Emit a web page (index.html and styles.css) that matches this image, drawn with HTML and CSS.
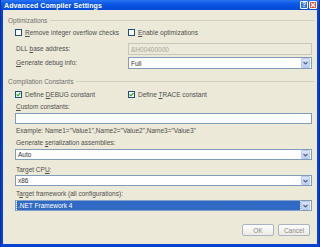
FILE: index.html
```html
<!DOCTYPE html>
<html>
<head>
<meta charset="utf-8">
<link rel="stylesheet" href="styles.css">
</head>
<body>
<div class="window">
  <div class="titlebar">
    <span class="title">Advanced Compiler Settings</span>
    <span class="tbtns">
      <span class="tbtn help">?</span>
      <span class="tbtn close">
        <svg width="6" height="6" viewBox="0 0 6 6"><path d="M1 1L5 5M5 1L1 5" stroke="#fff" stroke-width="1.3"/></svg>
      </span>
    </span>
  </div>
  <div class="client">
    <div class="group"><span class="gtitle">Optimizations</span><span class="gline"></span></div>
    <div class="grid g1">
      <label class="chk"><span class="box"></span><span><u>R</u>emove integer overflow checks</span></label>
      <label class="chk"><span class="box"></span><span><u>E</u>nable optimizations</span></label>
      <span class="lbl">DLL <u>b</u>ase address:</span>
      <div class="field disabled">&amp;H00400000</div>
      <span class="lbl"><u>G</u>enerate debug info:</span>
      <div class="field combo"><span class="val">Full</span><span class="arrow"><svg width="5" height="4" viewBox="0 0 5 4"><path d="M0.5 1L2.5 3L4.5 1" fill="none" stroke="#4d6185" stroke-width="1.1"/></svg></span></div>
    </div>
    <div class="group g2h"><span class="gtitle">Compilation Constants</span><span class="gline"></span></div>
    <div class="grid g2">
      <label class="chk"><span class="box checked"><svg width="5" height="5" viewBox="0 0 5 5"><path d="M0.6 2.4L1.9 3.8L4.4 0.9" fill="none" stroke="#21a121" stroke-width="1.2"/></svg></span><span>Define <u>D</u>EBUG constant</span></label>
      <label class="chk"><span class="box checked"><svg width="5" height="5" viewBox="0 0 5 5"><path d="M0.6 2.4L1.9 3.8L4.4 0.9" fill="none" stroke="#21a121" stroke-width="1.2"/></svg></span><span>Define <u>T</u>RACE constant</span></label>
    </div>
    <div class="stack">
      <span class="lbl l-custom"><u>C</u>ustom constants:</span>
      <div class="field wide f-custom"></div>
      <span class="lbl l-example">Example: Name1="Value1",Name2="Value2",Name3="Value3"</span>
      <span class="lbl l-gen">Generate <u>s</u>erialization assemblies:</span>
      <div class="field combo wide"><span class="val">Auto</span><span class="arrow"><svg width="5" height="4" viewBox="0 0 5 4"><path d="M0.5 1L2.5 3L4.5 1" fill="none" stroke="#4d6185" stroke-width="1.1"/></svg></span></div>
      <span class="lbl l-cpu">Target CP<u>U</u>:</span>
      <div class="field combo wide f-cpu"><span class="val">x86</span><span class="arrow"><svg width="5" height="4" viewBox="0 0 5 4"><path d="M0.5 1L2.5 3L4.5 1" fill="none" stroke="#4d6185" stroke-width="1.1"/></svg></span></div>
      <span class="lbl l-fw">T<u>a</u>rget framework (all configurations):</span>
      <div class="field combo wide sel"><span class="val"><span class="hl">.NET Framework 4</span></span><span class="arrow"><svg width="5" height="4" viewBox="0 0 5 4"><path d="M0.5 1L2.5 3L4.5 1" fill="none" stroke="#4d6185" stroke-width="1.1"/></svg></span></div>
    </div>
    <div class="buttons">
      <button class="btn">OK</button>
      <button class="btn">Cancel</button>
    </div>
  </div>
</div>
</body>
</html>
```
FILE: styles.css
```css
* { box-sizing: border-box; }
html, body { margin: 0; padding: 0; }
body {
  width: 320px;
  height: 247px;
  overflow: hidden;
  font-family: "Liberation Sans", Arial, sans-serif;
  font-size: 6.5px;
  color: #4f4f4f;
}
u { text-decoration: underline; text-underline-offset: 1px; }
.window {
  width: 320px;
  height: 247px;
  background: #0842d0;
  border-left: 1px solid #0831a8;
  border-right: 1px solid #0831a8;
  display: flex;
  flex-direction: column;
  padding: 0 2px 3px 2px;
}
.titlebar {
  height: 10px;
  margin: 0 -2px;
  padding: 0 2px 0 3px;
  display: flex;
  align-items: center;
  justify-content: space-between;
  background: linear-gradient(#2a74f4, #0a58e4 40%, #0449d8);
}
.title {
  color: #fff;
  font-weight: bold;
  font-size: 7px;
  letter-spacing: 0.1px;
}
.tbtns { display: flex; gap: 1px; }
.tbtn {
  width: 8px;
  height: 8px;
  border: 1px solid #fff;
  border-radius: 1px;
  display: flex;
  align-items: center;
  justify-content: center;
  color: #fff;
  font-weight: bold;
  font-size: 6.5px;
  line-height: 1;
}
.help { background: #2f6ff0; }
.close { background: #dc4a28; }
.client {
  flex: 1;
  background: #ece9d8;
  display: flex;
  flex-direction: column;
  padding: 0 5px 0 12px;
}
.group {
  display: flex;
  align-items: center;
  margin-left: -7px;
  margin-right: -2px;
  height: 9px;
  margin-top: 6px;
}
.gtitle { color: #727272; white-space: nowrap; padding-right: 3px; }
.gline { flex: 1; height: 1px; background: #d3d0c0; }
.grid {
  display: grid;
  grid-template-columns: 113px 1fr;
  align-items: center;
}
.g1 {
  grid-template-rows: 13px 12px 12px;
  row-gap: 2px;
  margin-top: 3px;
}
.g1 .chk { align-self: start; height: 9px; }
.g2h { margin-top: 8px; }
.g2 { margin-top: 4px; grid-template-rows: 9px; }
.chk { display: flex; align-items: center; gap: 3px; white-space: nowrap; }
.box {
  width: 7px;
  height: 7px;
  border: 1px solid #1c5180;
  background: #fff;
  display: flex;
  align-items: center;
  justify-content: center;
  flex: none;
}
.lbl { white-space: nowrap; line-height: 8px; }
.g1 .lbl { padding-left: 1px; }
.field {
  height: 12px;
  border: 1px solid #7f9db9;
  background: #fff;
  display: flex;
  align-items: center;
  padding-left: 2px;
  color: #333;
}
.field.disabled {
  background: #ebeadb;
  border-color: #c9c7ba;
  color: #a8a699;
}
.combo { padding: 0 1px 0 2px; }
.val { flex: 1; white-space: nowrap; }
.arrow {
  width: 9px;
  height: 10px;
  background: linear-gradient(#dce6fb, #bcd0f6);
  border: 1px solid #b7c9ef;
  border-radius: 1px;
  display: flex;
  align-items: center;
  justify-content: center;
}
.wide .arrow { height: 9px; }
.stack { display: flex; flex-direction: column; }
.stack .lbl { padding-left: 1px; }
.stack .field { margin-top: 2px; }
.wide { height: 11px; }
.l-custom { margin-top: 4px; }
.l-example { margin-top: 3px; }
.l-gen { margin-top: 4px; }
.l-cpu { margin-top: 6px; }
.stack .f-cpu { margin-top: 1px; }
.l-fw { margin-top: 4px; }
.sel { padding-left: 1px; }
.sel .val { display: flex; height: 9px; }
.hl {
  flex: 1;
  background: #316ac5;
  color: #fff;
  line-height: 9px;
  padding-left: 1px;
  outline: 1px dotted #8aa6d8;
  margin-right: 1px;
}
.buttons {
  display: flex;
  justify-content: flex-end;
  gap: 4px;
  margin-top: 13px;
  margin-right: 2px;
}
.btn {
  width: 32px;
  height: 12px;
  padding: 0;
  font-family: inherit;
  font-size: 6.5px;
  color: #8a8a8a;
  background: linear-gradient(#fdfdfb, #ecebe4);
  border: 1px solid #a9b3c3;
  border-radius: 2px;
}
```
